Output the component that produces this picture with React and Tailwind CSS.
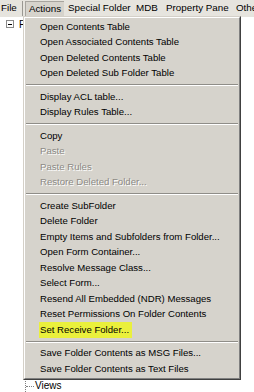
import React from "react";

const F = { fontFamily: '"Liberation Sans", Arial, sans-serif' };

function Item({ children, disabled, hl }) {
  return (
    <div className="h-[15.5px] flex items-center pl-[15px] whitespace-nowrap">
      {disabled ? (
        <span className="text-[#8c8a85] [text-shadow:1px_1px_0_#ffffff]">{children}</span>
      ) : hl ? (
        <span className="bg-[#eaf03c] text-black -ml-[1px] pl-[1px] pr-[3px] py-[1px]">{children}</span>
      ) : (
        <span className="text-black">{children}</span>
      )}
    </div>
  );
}

function Sep() {
  return (
    <div className="h-[8px] flex flex-col justify-center px-[1px]">
      <div className="h-px bg-[#8f8d88]" />
      <div className="h-px bg-white" />
    </div>
  );
}

export default function App() {
  return (
    <div className="relative w-[254px] h-[392px] overflow-hidden bg-white text-[9.6px]" style={F}>
      {/* menubar */}
      <div className="h-[17px] bg-[#e6e4de] flex items-stretch text-black whitespace-nowrap text-[9.8px]">
        <div className="shrink-0 pl-[1px] w-[22px] flex items-center">File</div>
        <div className="shrink-0 w-px bg-[#9a9892] my-[1px]" />
        <div className="shrink-0 ml-[2px] w-[39px] mt-[1px] bg-[#d6d3cc] border-l border-t border-[#a8a59f] flex items-center justify-center">Actions</div>
        <div className="shrink-0 ml-[4px] w-[68px] flex items-center">Special Folder</div>
        <div className="shrink-0 w-[30px] flex items-center">MDB</div>
        <div className="shrink-0 w-[70px] flex items-center">Property Pane</div>
        <div className="shrink-0 flex items-center">Other</div>
      </div>

      {/* tree */}
      <div className="flex items-center h-[14px] pl-[6px] text-black text-[10px]">
        <div className="w-[8px] h-[8px] border border-[#8a8a8a] flex items-center justify-center">
          <div className="w-[4px] h-px bg-black" />
        </div>
        <span className="ml-[5px]">F</span>
      </div>

      <div className="absolute left-[25px] top-[377px] h-[15px] w-px border-l border-dotted border-[#808080]" />
      <div className="absolute left-[26px] top-[386px] w-[8px] h-px border-t border-dotted border-[#808080]" />
      <div className="absolute left-[35px] top-[381px] leading-[10px] text-black text-[10px]">Views</div>

      {/* dropdown menu */}
      <div className="absolute left-[23px] top-[16px] w-[218px] border border-t-[#d4d0c8] border-l-[#d4d0c8] border-r-[#404040] border-b-[#404040]">
        <div className="bg-[#d6d3cc] border border-t-white border-l-white border-r-[#808080] border-b-[#808080] pt-[1px] pb-[1px]">
          <Item>Open Contents Table</Item>
          <Item>Open Associated Contents Table</Item>
          <Item>Open Deleted Contents Table</Item>
          <Item>Open Deleted Sub Folder Table</Item>
          <Sep />
          <Item>Display ACL table...</Item>
          <Item>Display Rules Table...</Item>
          <Sep />
          <Item>Copy</Item>
          <Item disabled>Paste</Item>
          <Item disabled>Paste Rules</Item>
          <Item disabled>Restore Deleted Folder...</Item>
          <Sep />
          <Item>Create SubFolder</Item>
          <Item>Delete Folder</Item>
          <Item>Empty Items and Subfolders from Folder...</Item>
          <Item>Open Form Container...</Item>
          <Item>Resolve Message Class...</Item>
          <Item>Select Form...</Item>
          <Item>Resend All Embedded (NDR) Messages</Item>
          <Item>Reset Permissions On Folder Contents</Item>
          <Item hl>Set Receive Folder...</Item>
          <Sep />
          <Item>Save Folder Contents as MSG Files...</Item>
          <Item>Save Folder Contents as Text Files</Item>
        </div>
      </div>
    </div>
  );
}
